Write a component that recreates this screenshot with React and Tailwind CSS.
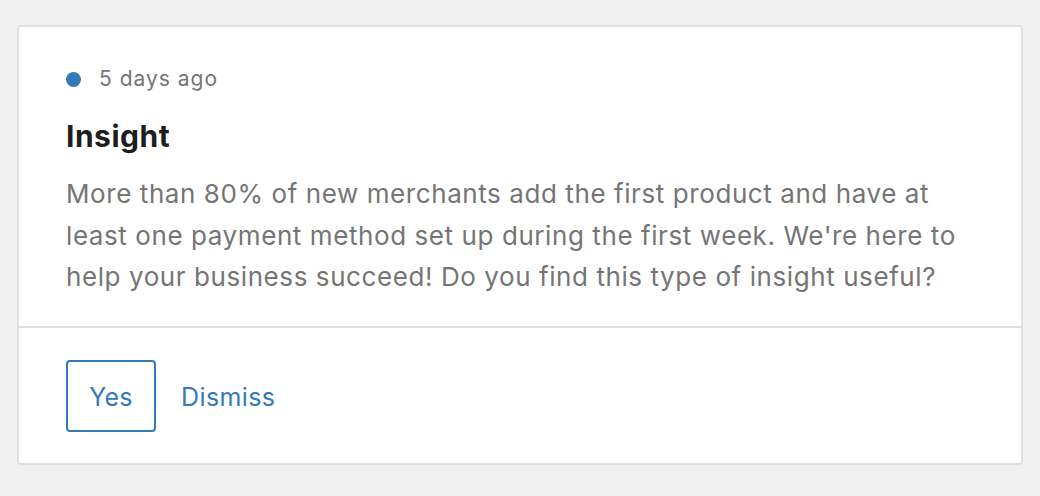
export default function App() {
  return (
    <div className="min-h-screen bg-[#f0f0f0] pt-[25px] pl-[17px] font-['Inter',sans-serif]">
      <div className="w-[1006px] h-[440px] bg-white border-2 border-[#e0e0e0] rounded-[4px] flex flex-col">
        {/* BODY */}
        <div className="px-[47px] pt-[38px] pb-[28px] border-b-2 border-[#e0e0e0]">
          <div className="flex items-center gap-[18px] h-[28px]">
            <span className="w-[15px] h-[15px] rounded-full bg-[#337ab7]" />
            <span className="text-[21px] tracking-[1px] text-[#757575] leading-[28px]">5 days ago</span>
          </div>
          <h2 className="mt-[25px] text-[30px] leading-[36px] font-bold tracking-[0.5px] text-[#1e1e1e]">
            Insight
          </h2>
          <p className="mt-[19px] text-[26px] leading-[41.5px] tracking-[0.58px] text-[#757575]">
            More than 80% of new merchants add the first product and have at
            least one payment method set up during the first week. We're here to
            help your business succeed! Do you find this type of insight useful?
          </p>
        </div>

        {/* FOOTER */}
        <div className="px-[47px] pt-[32px] flex items-center gap-[25px]">
          <button className="w-[90px] h-[72px] border-2 border-[#337ab7] rounded-[4px] text-[25px] tracking-[0.3px] text-[#337ab7] pt-[4px]">
            Yes
          </button>
          <button className="text-[25px] tracking-[0.4px] text-[#337ab7] pt-[4px]">Dismiss</button>
        </div>
      </div>
    </div>
  );
}
